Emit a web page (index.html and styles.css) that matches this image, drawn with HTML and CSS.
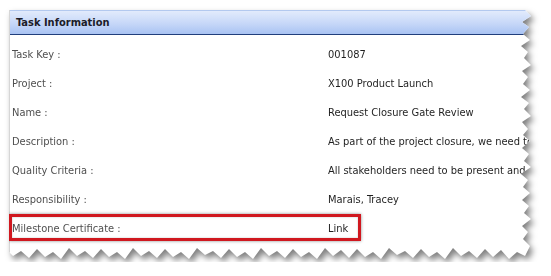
FILE: index.html
```html
<!DOCTYPE html>
<html lang="en">
<head>
    <meta charset="UTF-8">
    <title>Task Information</title>
    <link rel="stylesheet" href="styles.css">
</head>
<body>
    <div class="sheet">
        <div class="card">
            <div class="card-head">Task Information</div>
            <div class="rows">
                <div class="row"><span class="label">Task Key :</span><span class="value">001087</span></div>
                <div class="row"><span class="label">Project :</span><span class="value">X100 Product Launch</span></div>
                <div class="row"><span class="label">Name :</span><span class="value">Request Closure Gate Review</span></div>
                <div class="row"><span class="label">Description :</span><span class="value">As part of the project closure, we need to</span></div>
                <div class="row"><span class="label">Quality Criteria :</span><span class="value">All stakeholders need to be present and si</span></div>
                <div class="row"><span class="label">Responsibility :</span><span class="value">Marais, Tracey</span></div>
                <div class="row highlight"><span class="label">Milestone Certificate :</span><span class="value">Link</span></div>
            </div>
        </div>
    </div>
</body>
</html>
```

FILE: styles.css
```css
* {
    margin: 0;
    padding: 0;
    box-sizing: border-box;
}

body {
    font-family: 'DejaVu Sans Condensed', 'DejaVu Sans', sans-serif;
    font-size: 11px;
    background: white;
    padding: 10px 0 0 9px;
}

/* torn paper: the clip is on the card, the shadow on its parent */
.sheet {
    width: 524px;
    filter: drop-shadow(3px 4px 3px rgba(0, 0, 0, 0.5));
}

.card {
    width: 524px;
    height: 252px;
    background: white;
    border-left: 1px solid #d6d6d6;
    clip-path: polygon(
        0 0, 516px 0, 522px 6px, 513px 12px, 520px 17px, 514px 24px, 521px 30px,
        512px 36px, 519px 42px, 515px 48px, 522px 55px, 513px 61px, 519px 67px,
        514px 74px, 521px 80px, 512px 87px, 520px 93px, 515px 99px, 522px 106px,
        513px 112px, 519px 119px, 514px 125px, 521px 131px, 513px 138px, 520px 144px,
        515px 151px, 522px 157px, 512px 164px, 519px 170px, 514px 177px, 521px 183px,
        513px 190px, 520px 196px, 515px 203px, 522px 209px, 513px 216px, 519px 222px,
        514px 229px, 521px 236px, 516px 246px,
        508px 242px, 500px 249px, 492px 240px, 484px 247px, 476px 239px, 468px 248px,
        460px 241px, 452px 246px, 444px 238px, 436px 249px, 428px 242px, 420px 247px,
        412px 239px, 404px 248px, 396px 241px, 388px 245px, 380px 238px, 372px 249px,
        364px 242px, 356px 247px, 348px 239px, 340px 248px, 332px 240px, 324px 246px,
        316px 238px, 308px 249px, 300px 242px, 292px 247px, 284px 239px, 276px 248px,
        268px 241px, 260px 246px, 252px 238px, 244px 249px, 236px 242px, 228px 247px,
        220px 239px, 212px 248px, 204px 241px, 196px 245px, 188px 238px, 180px 249px,
        172px 242px, 164px 247px, 156px 239px, 148px 248px, 140px 241px, 132px 246px,
        124px 238px, 116px 249px, 108px 242px, 100px 247px, 92px 239px, 84px 248px,
        76px 241px, 68px 246px, 60px 238px, 52px 249px, 44px 242px, 36px 247px,
        28px 239px, 20px 248px, 12px 241px, 4px 246px, 0 242px
    );
}

.card-head {
    height: 25px;
    line-height: 23px;
    padding-left: 6px;
    font-weight: bold;
    color: #1c1c28;
    background: linear-gradient(to bottom, #e2ebfc 0%, #c6d7f8 55%, #a9c3f3 100%);
    border-top: 1px solid #b3c9ef;
    border-bottom: 1px solid #213f7c;
}

.rows {
    padding-top: 5px;
}

.row {
    display: grid;
    grid-template-columns: 316px 1fr;
    height: 29px;
    line-height: 30px;
    padding-left: 2px;
    white-space: nowrap;
    overflow: hidden;
}

.label {
    color: #4f4f4f;
}

.value {
    color: #1f1f1f;
}

.row.highlight {
    width: 352px;
    height: 27px;
    line-height: 24px;
    margin-left: -1px;
    padding-left: 0;
    border: 3px solid #d0181f;
    box-shadow: 0 0 3px rgba(0, 0, 0, 0.45), inset 0 0 2px rgba(0, 0, 0, 0.25);
}
```
